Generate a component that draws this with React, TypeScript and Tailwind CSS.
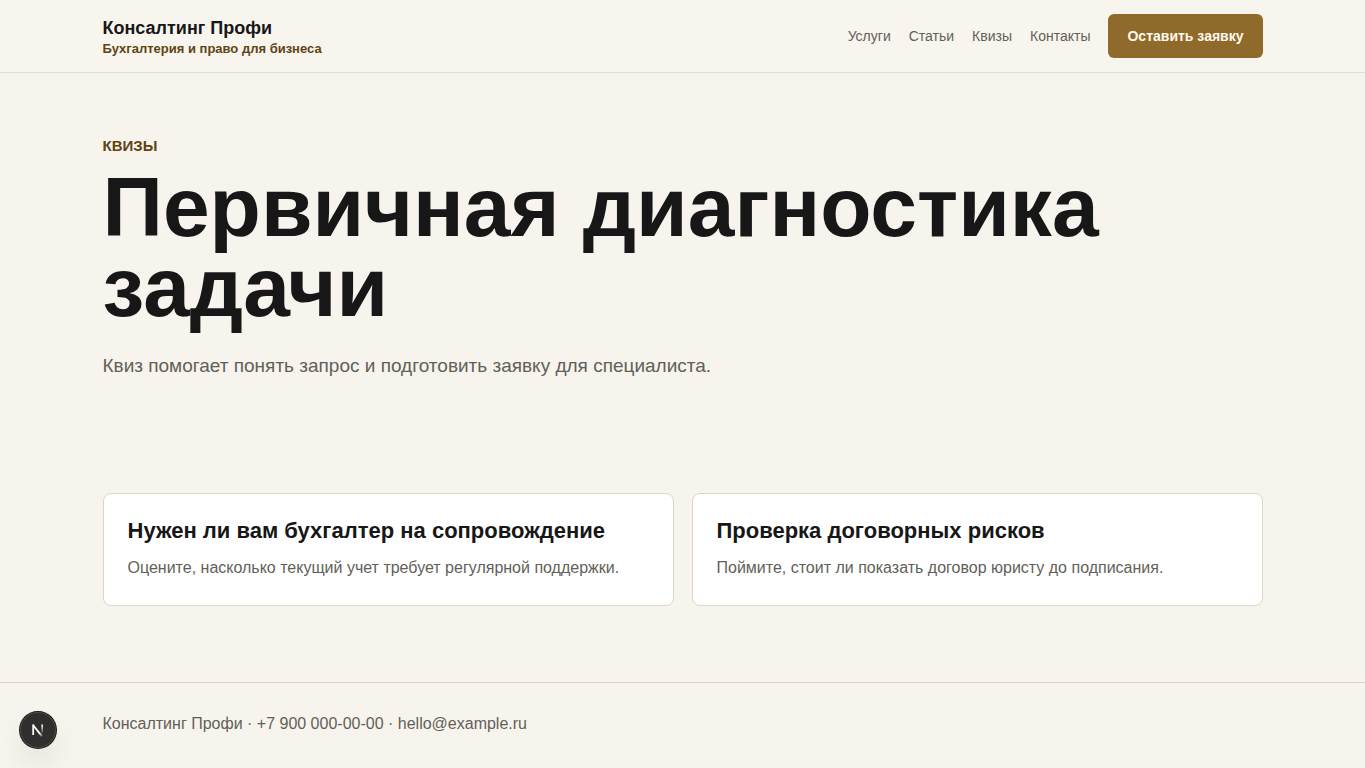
interface Quiz {
  title: string
  text: string
}

const NAV = ['Услуги', 'Статьи', 'Квизы', 'Контакты']

const QUIZZES: Quiz[] = [
  {
    title: 'Нужен ли вам бухгалтер на сопровождение',
    text: 'Оцените, насколько текущий учет требует регулярной поддержки.',
  },
  {
    title: 'Проверка договорных рисков',
    text: 'Поймите, стоит ли показать договор юристу до подписания.',
  },
]

function Header() {
  return (
    <header className="border-b border-[#e0ddd7] bg-[#f8f5ee]">
      <div className="mx-auto flex h-18 w-[calc(100%-32px)] max-w-[1160px] items-center justify-between">
        <a href="#" className="flex flex-col gap-px pt-[5px]">
          <span className="text-lg leading-5 font-extrabold text-[#171717]">Консалтинг Профи</span>
          <span className="text-[13px] leading-5 font-bold text-[#5f4314]">Бухгалтерия и право для бизнеса</span>
        </a>
        <div className="flex items-center gap-[18px]">
          <nav className="flex gap-[18px] text-sm text-[#625f59]">
            {NAV.map(item => (
              <a key={item} href="#">{item}</a>
            ))}
          </nav>
          <button type="button" className="h-11 rounded-md bg-[#8f6a2a] px-[19px] text-sm font-extrabold text-[#fffaf0]">
            Оставить заявку
          </button>
        </div>
      </div>
    </header>
  )
}

function DevBadge() {
  return (
    <button
      type="button"
      aria-label="Next.js"
      className="fixed bottom-5 left-5 flex size-9 items-center justify-center rounded-full bg-[#302f2d] shadow-[0_0_0_1px_#171717,inset_0_0_0_1px_#4a4946,0_16px_32px_-8px_rgba(0,0,0,0.24)]"
    >
      <svg width="14" height="14" viewBox="0 0 14 14" fill="none">
        <defs>
          <linearGradient id="diag" x1="9" y1="10" x2="12" y2="14" gradientUnits="userSpaceOnUse">
            <stop stopColor="#fff" />
            <stop offset="1" stopColor="#fff" stopOpacity="0" />
          </linearGradient>
          <linearGradient id="stem" x1="11" y1="2" x2="11" y2="11" gradientUnits="userSpaceOnUse">
            <stop stopColor="#fff" />
            <stop offset="1" stopColor="#fff" stopOpacity="0" />
          </linearGradient>
        </defs>
        <path d="M2.2 2.2L11 13.4" stroke="url(#diag)" strokeWidth="1.8" />
        <path d="M2.2 12V1.4" stroke="#fff" strokeWidth="1.8" />
        <path d="M11.2 1.4V11.5" stroke="url(#stem)" strokeWidth="1.6" />
      </svg>
    </button>
  )
}

export default function App() {
  return (
    <div className="min-h-screen bg-[#f7f4ed] font-['Liberation_Sans',Arial,sans-serif] text-[#171717]">
      <Header />

      <main className="mx-auto w-[calc(100%-32px)] max-w-[1160px]">
        <section className="pt-15 pb-16">
          <p className="text-[15px] leading-[26px] font-extrabold text-[#5f4314] uppercase">Квизы</p>
          <h1 className="mt-2 text-[84px] leading-[80px] font-bold">Первичная диагностика задачи</h1>
          <p className="mt-6 text-[19px] leading-[30px] text-[#625f59]">
            Квиз помогает понять запрос и подготовить заявку для специалиста.
          </p>
        </section>

        <section className="grid gap-[18px] pt-12 pb-19 md:grid-cols-2">
          {QUIZZES.map(quiz => (
            <a key={quiz.title} href="#" className="rounded-lg border border-[#ddd5c8] bg-white p-6">
              <h2 className="text-[22px] leading-[25px] font-bold">{quiz.title}</h2>
              <p className="mt-3 text-base leading-[26px] text-[#625f59]">{quiz.text}</p>
            </a>
          ))}
        </section>
      </main>

      <footer className="border-t border-[#ddd5c8]">
        <div className="mx-auto w-[calc(100%-32px)] max-w-[1160px] py-7 text-base leading-[26px] text-[#625f59]">
          Консалтинг Профи · +7 900 000-00-00 · hello@example.ru
        </div>
      </footer>

      <DevBadge />
    </div>
  )
}
